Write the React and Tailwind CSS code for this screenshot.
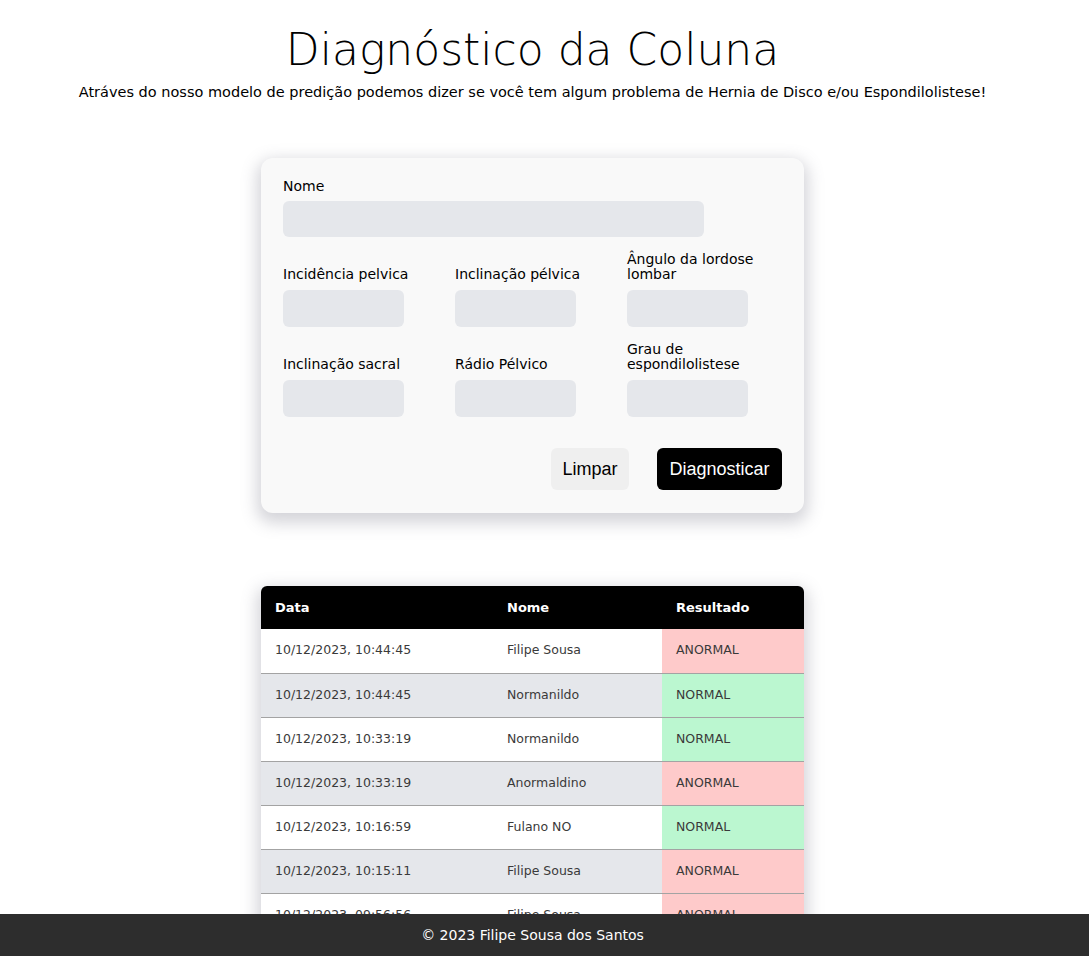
import React from "react";

const rows = [
  ["10/12/2023, 10:44:45", "Filipe Sousa", "ANORMAL"],
  ["10/12/2023, 10:44:45", "Normanildo", "NORMAL"],
  ["10/12/2023, 10:33:19", "Normanildo", "NORMAL"],
  ["10/12/2023, 10:33:19", "Anormaldino", "ANORMAL"],
  ["10/12/2023, 10:16:59", "Fulano NO", "NORMAL"],
  ["10/12/2023, 10:15:11", "Filipe Sousa", "ANORMAL"],
  ["10/12/2023, 09:56:56", "Filipe Sousa", "ANORMAL"],
  ["10/12/2023, 09:50:02", "Normanildo", "NORMAL"],
];

const fields = [
  "Incidência pelvica",
  "Inclinação pélvica",
  "Ângulo da lordose lombar",
  "Inclinação sacral",
  "Rádio Pélvico",
  "Grau de espondilolistese",
];

export default function App() {
  return (
    <div className="min-h-screen bg-white text-black pb-[60px]" style={{ fontFamily: '"DejaVu Sans", "Open Sans", sans-serif' }}>
      <div className="w-[1065px]">
        <h1 className="pt-[24px] text-center text-[44px] leading-[52px] font-extralight">Diagnóstico da Coluna</h1>
        <p className="mt-[6px] text-center text-[14.5px] leading-[20px]">
          Atráves do nosso modelo de predição podemos dizer se você tem algum problema de Hernia de Disco e/ou Espondilolistese!
        </p>

        <div className="mx-auto mt-[56px] w-[543px] rounded-[12px] bg-[#f9f9f9] px-[22px] pt-[20px] pb-[23px] shadow-[0_6px_16px_4px_rgba(100,100,120,0.28)]">
          <label className="block text-[14px] leading-[16px]">Nome</label>
          <div className="mt-[7px] h-[36px] w-[421px] rounded-[6px] bg-[#e5e7eb]" />
          <div className="mt-[13px] grid grid-cols-[150px_150px_150px] gap-x-[22px] gap-y-[13px]">
            {fields.map((f) => (
              <div key={f} className="flex flex-col">
                <div className="flex h-[32px] items-end text-[14px] leading-[15px]">{f}</div>
                <div className="mt-[8px] h-[37px] w-[121px] rounded-[6px] bg-[#e5e7eb]" />
              </div>
            ))}
          </div>
          <div className="mt-[31px] flex justify-end gap-[28px]">
            <button className="h-[42px] w-[78px] rounded-[6px] bg-[#efefef] text-[18px] text-black" style={{ fontFamily: '"Liberation Sans", Arial, sans-serif' }}>Limpar</button>
            <button className="h-[42px] w-[125px] rounded-[6px] bg-black text-[18px] text-white" style={{ fontFamily: '"Liberation Sans", Arial, sans-serif' }}>Diagnosticar</button>
          </div>
        </div>

        <div className="mx-auto mt-[73px] w-[543px] overflow-hidden rounded-t-[6px] shadow-[0_6px_16px_4px_rgba(100,100,120,0.28)]">
          <table className="w-full border-collapse text-left">
            <thead>
              <tr className="h-[43px] bg-black text-white text-[13px] font-semibold">
                <th className="w-[232px] pl-[14px]">Data</th>
                <th className="w-[169px] pl-[14px]">Nome</th>
                <th className="pl-[14px]">Resultado</th>
              </tr>
            </thead>
            <tbody>
              {rows.map((r, i) => (
                <tr key={i} className={(i % 2 ? "bg-[#e5e7eb]" : "bg-white") + " h-[44px] border-b border-[#a3a3a3] text-[12.5px] text-[#3a3a3a]"}>
                  <td className="pl-[14px]">{r[0]}</td>
                  <td className="pl-[14px]">{r[1]}</td>
                  <td className={(r[2] === "NORMAL" ? "bg-[#bbf7d0]" : "bg-[#fecaca]") + " pl-[14px]"}>{r[2]}</td>
                </tr>
              ))}
            </tbody>
          </table>
        </div>
      </div>

      <footer className="fixed bottom-0 left-0 right-0 h-[42px] bg-[#2d2d2d] text-white">
        <div className="flex h-full w-[1065px] items-center justify-center text-[14px]">© 2023 Filipe Sousa dos Santos</div>
      </footer>
    </div>
  );
}
